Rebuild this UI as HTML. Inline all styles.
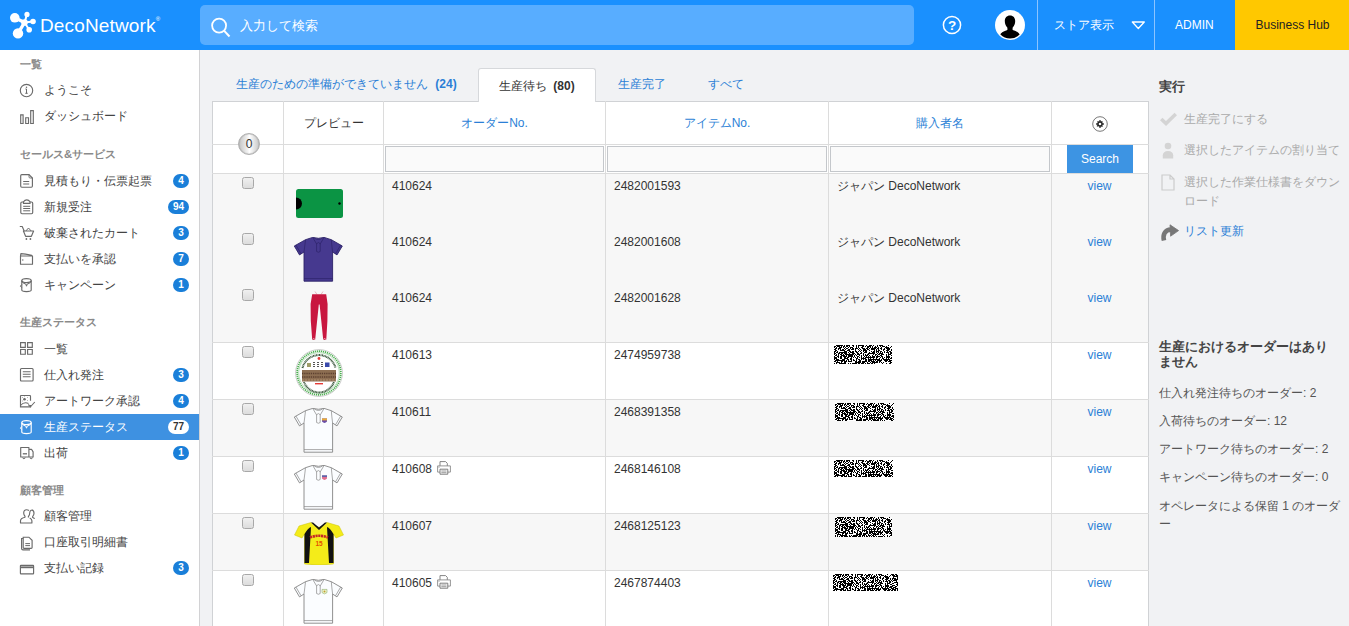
<!DOCTYPE html>
<html><head><meta charset="utf-8">
<style>
*{box-sizing:border-box;margin:0;padding:0}
html,body{width:1349px;height:626px;overflow:hidden;background:#f1f2f4;font-family:"Liberation Sans",sans-serif;color:#333}
.abs{position:absolute}
#hdr{position:absolute;left:0;top:0;width:1349px;height:50px;background:#1a90fe}
#logo{position:absolute;left:0;top:0}
#logotxt{position:absolute;left:40px;top:15px;color:#fff;font-size:19px;letter-spacing:0.15px}
#search{position:absolute;left:200px;top:5px;width:714px;height:40px;background:#58adff;border-radius:5px}
#search .ph{position:absolute;left:40px;top:12px;color:#fff;font-size:13px}
.hsep{position:absolute;top:0;width:1px;height:50px;background:#8cc4ff}
.htxt{position:absolute;color:#fff;font-size:13px}
#bhub{position:absolute;left:1235px;top:0;width:114px;height:50px;background:#ffc800;color:#222;font-size:12px;text-align:center;line-height:50px;padding-left:1px}
#side{position:absolute;left:0;top:50px;width:200px;height:576px;background:#fff;border-right:1px solid #d2d2d4}
.sh{position:absolute;left:20px;font-size:11.3px;color:#8a8a8a;font-weight:bold}
.si{position:absolute;left:0;width:199px;height:26px}
.si .t{position:absolute;left:44px;top:5px;font-size:12px;color:#444}
.si svg{position:absolute;left:19px;top:0}
.bd{position:absolute;right:10px;top:6px;min-width:16px;height:14px;border-radius:7px;background:#1a7fd9;color:#fff;font-size:10px;font-weight:bold;text-align:center;line-height:14px;padding:0 5px}
.si.act{background:#3e91e1}
.si.act .t{color:#fff}
.si.act .bd{background:#fff;color:#333}

.tab{position:absolute;top:76px;font-size:12px;color:#2b7fd6}
#acttab{position:absolute;left:478px;top:68px;width:118px;height:34px;background:#fff;border:1px solid #d6d8db;border-bottom:none;border-radius:3px 3px 0 0;font-size:12px;color:#333}
#tbl{position:absolute;left:212px;top:101px;width:937px;height:530px;background:#fff;border:1px solid #d0d2d5}
.vl{position:absolute;top:101px;width:1px;height:530px;background:#dcdcdc}
.hl{position:absolute;left:212px;width:937px;height:1px;background:#dcdcdc}
.th{position:absolute;top:115px;font-size:12px;color:#2b7fd6;text-align:center}
.inp{position:absolute;top:146px;height:26px;background:#fafafa;border:1px solid #c4c7cb}
.rowbg{position:absolute;left:213px;width:935px;background:#f7f7f7}
.cell{position:absolute;font-size:12px;color:#333}
.view{position:absolute;left:1051px;width:97px;text-align:center;font-size:12px;color:#2b7fd6}
.cb{position:absolute;left:242px;width:12px;height:12px;border:1px solid #a8a8a8;border-radius:2.5px;background:linear-gradient(#f0f0f0,#dcdcdc)}
.rp{position:absolute;left:1159px;font-size:12px;color:#555}
.redact svg{display:block}
.ra{position:absolute;left:1184px;font-size:12px;color:#aaa}
</style></head><body>
<div id="hdr">
  <svg id="logo" width="40" height="45" viewBox="0 0 40 45"><g fill="#fff"><circle cx="14.8" cy="17.8" r="4.8"/><circle cx="27" cy="14.4" r="2.6"/><circle cx="33" cy="21.5" r="2.8"/><circle cx="24.5" cy="22.5" r="3.3"/><circle cx="29.2" cy="29.7" r="2.8"/><circle cx="18" cy="33.4" r="5.2"/></g><g stroke="#fff" stroke-linecap="round"><line x1="14.8" y1="17.8" x2="24.5" y2="22.5" stroke-width="3.2"/><line x1="27" y1="14.4" x2="24.5" y2="22.5" stroke-width="2"/><line x1="33" y1="21.5" x2="24.5" y2="22.5" stroke-width="2"/><line x1="29.2" y1="29.7" x2="24.5" y2="22.5" stroke-width="2"/><line x1="18" y1="33.4" x2="24.5" y2="22.5" stroke-width="3.4"/></g></svg>
  <div id="logotxt">DecoNetwork<sup style="font-size:6px;vertical-align:top;position:relative;top:1px">®</sup></div>
  <div id="search">
    <svg class="abs" style="left:10px;top:12px" width="22" height="22" viewBox="0 0 22 22"><circle cx="9.1" cy="8.6" r="7" fill="none" stroke="#fff" stroke-width="1.8"/><line x1="14" y1="13.6" x2="19.5" y2="19.5" stroke="#fff" stroke-width="2"/></svg>
    <div class="ph">入力して検索</div>
  </div>
  <svg class="abs" style="left:942px;top:15px" width="20" height="20" viewBox="0 0 20 20"><circle cx="10" cy="10" r="8.6" fill="none" stroke="#fff" stroke-width="1.5"/><text x="10" y="14.8" text-anchor="middle" fill="#fff" font-size="13.5" font-weight="bold" font-family="Liberation Sans">?</text></svg>
  <svg class="abs" style="left:995px;top:10px" width="30" height="30" viewBox="0 0 30 30"><circle cx="15" cy="15" r="15" fill="#fff"/><clipPath id="av"><circle cx="15" cy="15" r="13.6"/></clipPath><g clip-path="url(#av)" fill="#000"><path d="M15 5.5c-3.3 0-5.2 2.4-5.2 5.6 0 2.6 1 5.2 2.6 6.6v2.2c-3.6 1-6.6 2.6-7.6 5.6L4 30h22l-0.8-4.5c-1-3-4-4.6-7.6-5.6v-2.2c1.6-1.4 2.6-4 2.6-6.6 0-3.2-1.9-5.6-5.2-5.6z"/></g></svg>
  <div class="hsep" style="left:1037px"></div>
  <div class="htxt" style="left:1054px;top:17px;font-size:12px">ストア表示</div>
  <svg class="abs" style="left:1131px;top:21px" width="15" height="10" viewBox="0 0 15 10"><path d="M1.3 1 L13.3 1 L7.3 7.5Z" fill="none" stroke="#fff" stroke-width="1.3" stroke-linejoin="round"/></svg>
  <div class="hsep" style="left:1154px"></div>
  <div class="htxt" style="left:1175px;top:18px;font-size:12px">ADMIN</div>
  <div id="bhub">Business Hub</div>
</div>

<div id="side">
<div class="sh" style="top:7px">一覧</div>
<div class="si" style="top:27px"><svg width="18" height="26" viewBox="0 0 18 26"><circle cx="7.5" cy="13.5" r="6.2" fill="none" stroke="#6a6a6a" stroke-width="1.15"/><path d="M7.5 12v4.3M6.3 16.3h2.4M6.4 12h1.1" stroke="#6a6a6a" stroke-width="1" fill="none"/><circle cx="7.5" cy="10.2" r="0.75" fill="#6a6a6a"/></svg><span class="t">ようこそ</span></div>
<div class="si" style="top:53px"><svg width="18" height="26" viewBox="0 0 18 26"><path d="M1.7 11.9h2.4v8.6h-2.4zM6.7 14.7h2.8v5.8h-2.8zM11.7 7.6h2.6v12.9h-2.6z" fill="none" stroke="#6a6a6a" stroke-width="1.15"/></svg><span class="t">ダッシュボード</span></div>
<div class="sh" style="top:97px">セールス&amp;サービス</div>
<div class="si" style="top:118px"><svg width="18" height="26" viewBox="0 0 18 26"><path d="M2.8 6.6h7.2l3.4 3.4v8.1q0 1.1-1.1 1.1h-9.5q-1.1 0-1.1-1.1v-10.4q0-1.1 1.1-1.1z" fill="none" stroke="#6a6a6a" stroke-width="1.15"/><path d="M10 6.6v2.3q0 1.1 1.1 1.1h2.3" fill="none" stroke="#6a6a6a" stroke-width="0.9"/><path d="M4.2 13.5h6M4.2 16h6" stroke="#6a6a6a" stroke-width="1.1"/></svg><span class="t">見積もり・伝票起票</span><span class="bd">4</span></div>
<div class="si" style="top:144px"><svg width="18" height="26" viewBox="0 0 18 26"><path d="M4.5 8h-1.5q-1.2 0-1.2 1.2v9.3q0 1.2 1.2 1.2h9.5q1.2 0 1.2-1.2v-9.3q0-1.2-1.2-1.2h-1.5" fill="none" stroke="#6a6a6a" stroke-width="1.15"/><path d="M4.5 9.3h6.5v-1.5q-1.2-1.9-3.2-1.9t-3.3 1.9z" fill="none" stroke="#6a6a6a" stroke-width="1.15"/><path d="M4.2 12.3h7M4.2 14.5h7M4.2 16.8h7" stroke="#6a6a6a" stroke-width="1"/></svg><span class="t">新規受注</span><span class="bd">94</span></div>
<div class="si" style="top:170px"><svg width="18" height="26" viewBox="0 0 18 26"><path d="M0.8 6.5h2.4l2 4.5M4.4 11h10.2l-2.2 5.3h-5.8z" fill="none" stroke="#6a6a6a" stroke-width="1.15" stroke-linejoin="round"/><path d="M6.8 11l2.7-3 2.7 3" fill="none" stroke="#6a6a6a" stroke-width="1"/><circle cx="7.4" cy="19" r="0.9" fill="#6a6a6a"/><circle cx="11.4" cy="19" r="0.9" fill="#6a6a6a"/></svg><span class="t">破棄されたカート</span><span class="bd">3</span></div>
<div class="si" style="top:196px"><svg width="18" height="26" viewBox="0 0 18 26"><path d="M1.5 10v8.2h12v-8.2zM1.5 10l0.4-2.4q4 0.3 10.8 1.6l0.5 0.8" fill="none" stroke="#6a6a6a" stroke-width="1.15" stroke-linejoin="round"/><circle cx="3.8" cy="14" r="0.7" fill="#6a6a6a"/></svg><span class="t">支払いを承認</span><span class="bd">7</span></div>
<div class="si" style="top:222px"><svg width="18" height="26" viewBox="0 0 18 26"><path d="M2.8 8.6v9.5q0 1.5 4.7 1.5t4.7-1.5v-9.5" fill="none" stroke="#6a6a6a" stroke-width="1.15"/><ellipse cx="7.5" cy="8.6" rx="4.7" ry="2" fill="none" stroke="#6a6a6a" stroke-width="1.15"/><path d="M2.8 9.5q2 2.5 4 2.5l0.7 2.2 0.7-2.2q2 0 4-2.5" fill="none" stroke="#6a6a6a" stroke-width="1"/><path d="M2.8 12.5l-1.4 1.6 1.4 1.6" fill="none" stroke="#6a6a6a" stroke-width="1"/></svg><span class="t">キャンペーン</span><span class="bd">1</span></div>
<div class="sh" style="top:265px">生産ステータス</div>
<div class="si" style="top:286px"><svg width="18" height="26" viewBox="0 0 18 26"><path d="M1.6 6.6h4.7v4.7h-4.7zM8.6 6.6h4.7v4.7h-4.7zM1.6 13.5h4.7v4.7h-4.7zM8.6 13.5h4.7v4.7h-4.7z" fill="none" stroke="#6a6a6a" stroke-width="1.15"/></svg><span class="t">一覧</span></div>
<div class="si" style="top:312px"><svg width="18" height="26" viewBox="0 0 18 26"><path d="M2.5 6.5h10.6q1 0 1 1v10.5q0 1-1 1h-10.6q-1 0-1-1v-10.5q0-1 1-1z" fill="none" stroke="#6a6a6a" stroke-width="1.15"/><path d="M3.8 9.8h7.8M3.8 12.2h7.8M3.8 14.8h7.8" stroke="#6a6a6a" stroke-width="1.05"/></svg><span class="t">仕入れ発注</span><span class="bd">3</span></div>
<div class="si" style="top:338px"><svg width="18" height="26" viewBox="0 0 18 26"><path d="M11.5 17v1.9h-10v-10.8q0-0.6 0.6-0.6h8.7q0.7 0 0.7 0.7v4.5" fill="none" stroke="#6a6a6a" stroke-width="1.15"/><path d="M1.5 17.5q3.5-4 8-2" fill="none" stroke="#6a6a6a" stroke-width="1.05"/><circle cx="5.5" cy="11.2" r="1.3" fill="#6a6a6a"/><path d="M3 9.5h.6M8 9.5h.6M3 13h.6M8 12.5h.6M5.5 8.6v.5" stroke="#6a6a6a" stroke-width="0.8"/><path d="M9.3 16.5l2.2 2.3 4.3-4.8" fill="none" stroke="#6a6a6a" stroke-width="1.1"/></svg><span class="t">アートワーク承認</span><span class="bd">4</span></div>
<div class="si act" style="top:364px"><svg width="18" height="26" viewBox="0 0 18 26"><path d="M2.8 8.6v9.5q0 1.5 4.7 1.5t4.7-1.5v-9.5" fill="none" stroke="#fff" stroke-width="1.15"/><ellipse cx="7.5" cy="8.6" rx="4.7" ry="2" fill="none" stroke="#fff" stroke-width="1.15"/><path d="M2.8 9.5q2 2.5 4 2.5l0.7 2.2 0.7-2.2q2 0 4-2.5" fill="none" stroke="#fff" stroke-width="1"/><path d="M2.8 12.5l-1.4 1.6 1.4 1.6" fill="none" stroke="#fff" stroke-width="1"/></svg><span class="t">生産ステータス</span><span class="bd">77</span></div>
<div class="si" style="top:390px"><svg width="18" height="26" viewBox="0 0 18 26"><path d="M1.7 7.5h8.2v9.5h-8.2zM10.5 9.3h2l1.6 2.6v5.1h-3.6" fill="none" stroke="#6a6a6a" stroke-width="1.15" stroke-linejoin="round"/><path d="M3.8 13.8h4.2" stroke="#6a6a6a" stroke-width="1.3"/><path d="M3.7 17.5q0 1.2 1.2 1.2t1.2-1.2M11 17.5q0 1.2 1.2 1.2t1.2-1.2" fill="none" stroke="#6a6a6a" stroke-width="1"/></svg><span class="t">出荷</span><span class="bd">1</span></div>
<div class="sh" style="top:433px">顧客管理</div>
<div class="si" style="top:453px"><svg width="18" height="26" viewBox="0 0 18 26"><path d="M10 7.5q-1.2-0.8-2.4-0.8-2.9 0-2.9 3.3 0 2.1 1.3 3.2v1.1q-4.5 1.1-4.5 3.5v2.2h11.4v-2.2q0-1.6-2.2-2.7" fill="none" stroke="#6a6a6a" stroke-width="1.15" stroke-linejoin="round"/><path d="M9.4 14.5v-1q1.3-1.1 1.3-3.2 0-3.3 2.7-3.3" fill="none" stroke="#6a6a6a" stroke-width="1.15"/><path d="M13 7.1q2 0.3 2 3.2 0 2-1.3 3.1v1.1q1.7 0.4 1.7 1.5" fill="none" stroke="#6a6a6a" stroke-width="1.15"/></svg><span class="t">顧客管理</span></div>
<div class="si" style="top:479px"><svg width="18" height="26" viewBox="0 0 18 26"><path d="M4.2 8.2h5.7l3.2 3.1v7.2q0 .9-.9.9h-7.2q-.8 0-.8-.9z" fill="none" stroke="#6a6a6a" stroke-width="1.15"/><path d="M4.2 9.5h-1.6v10q0 1.4 1.4 1.4h7" fill="none" stroke="#6a6a6a" stroke-width="1.15"/><path d="M6.3 14.6h4.7M6.3 16.6h4.7" stroke="#6a6a6a" stroke-width="1"/></svg><span class="t">口座取引明細書</span></div>
<div class="si" style="top:505px"><svg width="18" height="26" viewBox="0 0 18 26"><path d="M2 10.3h12q.6 0 .6.6v7.3q0 .6-.6.6h-12q-.6 0-.6-.6v-7.3q0-.6.6-.6z" fill="none" stroke="#6a6a6a" stroke-width="1.15"/><path d="M1.4 12.3h13.2" stroke="#6a6a6a" stroke-width="1.8"/></svg><span class="t">支払い記録</span><span class="bd">3</span></div>
</div>


<div class="tab" style="left:236px">生産のための準備ができていません <b style="margin-left:4px">(24)</b></div>
<div class="tab" style="left:618px">生産完了</div>
<div class="tab" style="left:708px">すべて</div>
<div id="tbl"></div>
<div id="acttab"><span style="position:absolute;left:20px;top:9px">生産待ち <b style="margin-left:3px">(80)</b></span></div>
<!-- row backgrounds -->
<div class="rowbg" style="top:174px;height:168px"></div>
<div class="rowbg" style="top:400px;height:56px"></div>
<div class="rowbg" style="top:514px;height:56px"></div>
<!-- horizontal lines -->
<div class="hl" style="top:144px"></div>
<div class="hl" style="top:173px"></div>
<div class="hl" style="top:342px"></div>
<div class="hl" style="top:399px"></div>
<div class="hl" style="top:456px"></div>
<div class="hl" style="top:513px"></div>
<div class="hl" style="top:570px"></div>
<!-- vertical lines -->
<div class="vl" style="left:283px"></div>
<div class="vl" style="left:383px"></div>
<div class="vl" style="left:605px"></div>
<div class="vl" style="left:828px"></div>
<div class="vl" style="left:1051px"></div>
<!-- header -->
<div class="th" style="left:284px;width:99px;color:#333">プレビュー</div>
<div class="th" style="left:384px;width:221px">オーダーNo.</div>
<div class="th" style="left:606px;width:222px">アイテムNo.</div>
<div class="th" style="left:829px;width:222px">購入者名</div>
<div class="abs" style="left:238px;top:133px;width:22px;height:22px;border-radius:50%;border:1px solid #b0b0b0;background:linear-gradient(90deg,#c4c4c4 0%,#f4f4f4 45%,#ffffff 52%,#c8c8c8 100%);box-shadow:inset 0 0 1px #888;font-size:12px;color:#333;text-align:center;line-height:20px">0</div>
<svg class="abs" style="left:1092px;top:116px" width="16" height="16" viewBox="0 0 16 16"><circle cx="8" cy="8" r="7.3" fill="#fff" stroke="#555" stroke-width="0.8"/><g fill="#222" transform="translate(8 8) scale(0.82) translate(-8 -8)"><circle cx="8" cy="8" r="3.4"/><path d="M7 3.3h2v2h-2zM7 10.7h2v2h-2zM3.3 7h2v2h-2zM10.7 7h2v2h-2z"/><path d="M4.5 5.2l1-1 1.4 1.4-1 1zM9.1 10.4l1-1 1.4 1.4-1 1zM10.4 4.2l1 1-1.4 1.4-1-1zM5.2 9.1l1 1-1.4 1.4-1-1z"/></g><circle cx="8" cy="8" r="1.3" fill="#fff"/></svg>
<div class="inp" style="left:385px;width:219px"></div>
<div class="inp" style="left:607px;width:220px"></div>
<div class="inp" style="left:830px;width:220px"></div>
<div class="abs" style="left:1067px;top:145px;width:66px;height:28px;background:#3d94e3;color:#fff;font-size:12px;text-align:center;line-height:28px">Search</div>
<div class="cb" style="top:177px"></div>
<div class="cell" style="left:392px;top:179px">410624</div>
<div class="cell" style="left:614px;top:179px">2482001593</div>
<div class="cell" style="left:837px;margin-top:-1px;top:179px">ジャパン DecoNetwork</div>
<div class="view" style="top:179px">view</div>
<div class="cb" style="top:233px"></div>
<div class="cell" style="left:392px;top:235px">410624</div>
<div class="cell" style="left:614px;top:235px">2482001608</div>
<div class="cell" style="left:837px;margin-top:-1px;top:235px">ジャパン DecoNetwork</div>
<div class="view" style="top:235px">view</div>
<div class="cb" style="top:289px"></div>
<div class="cell" style="left:392px;top:291px">410624</div>
<div class="cell" style="left:614px;top:291px">2482001628</div>
<div class="cell" style="left:837px;margin-top:-1px;top:291px">ジャパン DecoNetwork</div>
<div class="view" style="top:291px">view</div>
<div class="cb" style="top:346px"></div>
<div class="cell" style="left:392px;top:348px">410613</div>
<div class="cell" style="left:614px;top:348px">2474959738</div>
<svg width="0" height="0" style="position:absolute"><filter id="nz" x="0" y="0" width="100%" height="100%" color-interpolation-filters="sRGB"><feTurbulence type="fractalNoise" baseFrequency="1.4" numOctaves="1" seed="7"/><feColorMatrix type="saturate" values="0"/><feComponentTransfer><feFuncR type="linear" slope="1" intercept="-0.012"/><feFuncG type="linear" slope="1" intercept="-0.012"/><feFuncB type="linear" slope="1" intercept="-0.012"/></feComponentTransfer><feComponentTransfer><feFuncR type="discrete" tableValues="0 1"/><feFuncG type="discrete" tableValues="0 1"/><feFuncB type="discrete" tableValues="0 1"/><feFuncA type="table" tableValues="1 1"/></feComponentTransfer></filter></svg>
<svg class="abs" style="left:834px;top:345px" width="58" height="19"><rect width="58" height="19" filter="url(#nz)"/></svg>
<div class="view" style="top:348px">view</div>
<div class="cb" style="top:403px"></div>
<div class="cell" style="left:392px;top:405px">410611</div>
<div class="cell" style="left:614px;top:405px">2468391358</div>
<svg class="abs" style="left:835px;top:403px" width="59" height="18"><rect width="59" height="18" filter="url(#nz)"/></svg>
<div class="view" style="top:405px">view</div>
<div class="cb" style="top:460px"></div>
<div class="cell" style="left:392px;top:462px">410608</div>
<svg class="abs" style="left:437px;top:461px" width="14" height="14" viewBox="0 0 14 14"><path d="M3 5V0.6h5.6l1.7 1.7V5" fill="#fff" stroke="#777" stroke-width="0.9"/><path d="M0.6 4.9h12.8v6.2h-12.8z" fill="#fff" stroke="#8a8a8a" stroke-width="0.9"/><path d="M3 8.2h7.8v5h-7.8z" fill="#fff" stroke="#6f6f6f" stroke-width="0.9"/><path d="M4.3 10h5.2M4.3 11.7h5.2" stroke="#999" stroke-width="1"/><path d="M1.5 6.2h1" stroke="#777" stroke-width="0.8"/></svg>
<div class="cell" style="left:614px;top:462px">2468146108</div>
<svg class="abs" style="left:834px;top:460px" width="59" height="17"><rect width="59" height="17" filter="url(#nz)"/></svg>
<div class="view" style="top:462px">view</div>
<div class="cb" style="top:517px"></div>
<div class="cell" style="left:392px;top:519px">410607</div>
<div class="cell" style="left:614px;top:519px">2468125123</div>
<svg class="abs" style="left:835px;top:517px" width="57" height="20"><rect width="57" height="20" filter="url(#nz)"/></svg>
<div class="view" style="top:519px">view</div>
<div class="cb" style="top:574px"></div>
<div class="cell" style="left:392px;top:576px">410605</div>
<svg class="abs" style="left:437px;top:575px" width="14" height="14" viewBox="0 0 14 14"><path d="M3 5V0.6h5.6l1.7 1.7V5" fill="#fff" stroke="#777" stroke-width="0.9"/><path d="M0.6 4.9h12.8v6.2h-12.8z" fill="#fff" stroke="#8a8a8a" stroke-width="0.9"/><path d="M3 8.2h7.8v5h-7.8z" fill="#fff" stroke="#6f6f6f" stroke-width="0.9"/><path d="M4.3 10h5.2M4.3 11.7h5.2" stroke="#999" stroke-width="1"/><path d="M1.5 6.2h1" stroke="#777" stroke-width="0.8"/></svg>
<div class="cell" style="left:614px;top:576px">2467874403</div>
<svg class="abs" style="left:833px;top:574px" width="65" height="17"><rect width="65" height="17" filter="url(#nz)"/></svg>
<div class="view" style="top:576px">view</div>

<svg class="abs" style="left:296px;top:189px" width="47" height="29" viewBox="0 0 47 29"><rect x="0" y="0" width="47" height="29" rx="2.5" fill="#0b9444"/><path d="M0 8.5 a6 6 0 0 1 0 12z" fill="#000"/><circle cx="43.5" cy="14.5" r="1.2" fill="#000"/></svg>
<svg class="abs" style="left:294px;top:237px" width="49" height="46" viewBox="0 0 49 46"><path d="M18.7 0.4 L11.5 2.7 L0.3 9 L5.5 17.9 L10 15 L10 44.2 L38.6 44.2 L38.6 15 L43 17.9 L48.3 9 L37.3 2.7 L30.1 0.4 Q24.4 2.2 18.7 0.4Z" fill="#46398f" stroke="#2c2268" stroke-width="0.9" stroke-linejoin="round"/><path d="M18.7 0.4 L22.5 6.8 L24.4 5.5 L26.3 6.8 L30.1 0.4 M20.3 0.9 Q24.4 4 28.5 0.9 M11.5 2.7 Q10.8 9 10 15 M37.3 2.7 Q37.8 9 38.6 15 M1.9 8 L7.1 16.8 M46.7 8 L41.5 16.8 M10 41.6 H38.6" fill="none" stroke="#2c2268" stroke-width="0.7"/><path d="M22.6 6.5 V14.5 Q24.4 16 26.2 14.5 V6.5" fill="none" stroke="#2c2268" stroke-width="0.7"/></svg>
<svg class="abs" style="left:309px;top:291px" width="20" height="50" viewBox="0 0 20 50"><path d="M6 0.5 l2 3 M14 0.5 l-2 3" stroke="#d98a9a" stroke-width="0.6"/><path d="M3.2 3.3 H17.2 L18.6 13 L18.4 30 L17.3 48.5 Q15.5 49.5 14.2 48.5 L10.6 13.5 L9.8 13.5 L6.2 48.5 Q4.8 49.5 3.2 48.5 L1.8 30 L1.6 13 Z" fill="#c8173f"/><path d="M3.8 48.3 Q4.7 47 5.8 48.3 M14.5 48.3 Q15.6 47 16.8 48.3" stroke="#fff" stroke-width="0.7" fill="none"/></svg>
<svg class="abs" style="left:295px;top:349px" width="48" height="48" viewBox="0 0 48 48"><circle cx="24" cy="24" r="23.4" fill="#fff" stroke="#aaa" stroke-width="0.6"/><circle cx="24" cy="24" r="21.8" fill="none" stroke="#4caf50" stroke-width="1.8" stroke-dasharray="1.2 0.8"/><circle cx="24" cy="24" r="20.3" fill="none" stroke="#a5d6a7" stroke-width="0.8"/><path d="M7.5 19 A17 17 0 0 1 40.5 19" fill="none" stroke="#3d5a40" stroke-width="2" stroke-dasharray="1 0.5"/><path d="M9 33 A16 16 0 0 0 39 33" fill="none" stroke="#3d5a40" stroke-width="2" stroke-dasharray="1 0.5"/><circle cx="24" cy="9.5" r="1.4" fill="#e53935"/><rect x="12" y="14" width="4" height="4" fill="#9e9d6a"/><path d="M18 13.5h2M18 15.5h2M18 17.5h2M22 13.5h2M22 15.5h2M22 17.5h2M26 13.5h2M26 15.5h2M26 17.5h2" stroke="#555" stroke-width="1"/><rect x="30" y="13.5" width="4.5" height="4.5" fill="#3949ab"/><rect x="7" y="21" width="34" height="11.5" fill="#8d6e52"/><path d="M7 24.5h34M7 28h34" stroke="#5d4030" stroke-width="1.6" stroke-dasharray="1.3 0.9"/><path d="M7 31h34" stroke="#b09070" stroke-width="1.2" stroke-dasharray="2 1"/><rect x="20" y="34" width="8" height="1.4" fill="#e53935"/></svg>
<svg class="abs" style="left:294px;top:408px" width="49" height="46" viewBox="0 0 49 46"><path d="M18.7 0.4 L11.5 2.7 L0.3 9 L5.5 17.9 L10 15 L10 44.2 L38.6 44.2 L38.6 15 L43 17.9 L48.3 9 L37.3 2.7 L30.1 0.4 Q24.4 2.2 18.7 0.4Z" fill="#fbfdff" stroke="#858585" stroke-width="0.9" stroke-linejoin="round"/><path d="M18.7 0.4 L22.5 6.8 L24.4 5.5 L26.3 6.8 L30.1 0.4 M20.3 0.9 Q24.4 4 28.5 0.9 M11.5 2.7 Q10.8 9 10 15 M37.3 2.7 Q37.8 9 38.6 15 M1.9 8 L7.1 16.8 M46.7 8 L41.5 16.8 M10 41.6 H38.6" fill="none" stroke="#858585" stroke-width="0.7"/><path d="M22.6 6.5 V14.5 Q24.4 16 26.2 14.5 V6.5" fill="none" stroke="#858585" stroke-width="0.7"/><path d="M28 10.4 h5 v3.2 q-2.5 2.6 -5 0z" fill="#6b4fa8"/><rect x="28" y="10.4" width="5" height="2" fill="#e8a838"/></svg>
<svg class="abs" style="left:294px;top:465px" width="49" height="46" viewBox="0 0 49 46"><path d="M18.7 0.4 L11.5 2.7 L0.3 9 L5.5 17.9 L10 15 L10 44.2 L38.6 44.2 L38.6 15 L43 17.9 L48.3 9 L37.3 2.7 L30.1 0.4 Q24.4 2.2 18.7 0.4Z" fill="#fbfdff" stroke="#858585" stroke-width="0.9" stroke-linejoin="round"/><path d="M18.7 0.4 L22.5 6.8 L24.4 5.5 L26.3 6.8 L30.1 0.4 M20.3 0.9 Q24.4 4 28.5 0.9 M11.5 2.7 Q10.8 9 10 15 M37.3 2.7 Q37.8 9 38.6 15 M1.9 8 L7.1 16.8 M46.7 8 L41.5 16.8 M10 41.6 H38.6" fill="none" stroke="#858585" stroke-width="0.7"/><path d="M22.6 6.5 V14.5 Q24.4 16 26.2 14.5 V6.5" fill="none" stroke="#858585" stroke-width="0.7"/><path d="M28 10.4 h5 v3.2 q-2.5 2.6 -5 0z" fill="#e07090"/><rect x="28" y="10.4" width="5" height="1.4" fill="#4060b0"/></svg>
<svg class="abs" style="left:294px;top:522px" width="50" height="43" viewBox="0 0 50 43"><path d="M17 0.5 L5 4 L0.5 13 L8 16 L10.5 12 L10.5 42 Q25 44 39.5 42 L39.5 12 L42 16 L49.5 13 L45 4 L33 0.5 Q25 10 17 0.5Z" fill="#f4ec19" stroke="#c8c000" stroke-width="0.5"/><path d="M10.5 12 Q14 6 17 5 L15 41 L10.5 41Z M39.5 12 Q36 6 33 5 L35 41 L39.5 41Z" fill="#111"/><path d="M17 0.5 L25 8 L33 0.5 L31 0.5 L25 5.5 L19 0.5Z" fill="#111"/><path d="M16 15.5 Q25 12 34 15.5" fill="none" stroke="#c62828" stroke-width="2.6" stroke-dasharray="2.2 0.6"/><text x="25" y="24" text-anchor="middle" font-size="6.5" font-weight="bold" fill="#e65100" font-family="Liberation Sans">15</text></svg>
<svg class="abs" style="left:294px;top:579px" width="49" height="46" viewBox="0 0 49 46"><path d="M18.7 0.4 L11.5 2.7 L0.3 9 L5.5 17.9 L10 15 L10 44.2 L38.6 44.2 L38.6 15 L43 17.9 L48.3 9 L37.3 2.7 L30.1 0.4 Q24.4 2.2 18.7 0.4Z" fill="#fbfdff" stroke="#858585" stroke-width="0.9" stroke-linejoin="round"/><path d="M18.7 0.4 L22.5 6.8 L24.4 5.5 L26.3 6.8 L30.1 0.4 M20.3 0.9 Q24.4 4 28.5 0.9 M11.5 2.7 Q10.8 9 10 15 M37.3 2.7 Q37.8 9 38.6 15 M1.9 8 L7.1 16.8 M46.7 8 L41.5 16.8 M10 41.6 H38.6" fill="none" stroke="#858585" stroke-width="0.7"/><path d="M22.6 6.5 V14.5 Q24.4 16 26.2 14.5 V6.5" fill="none" stroke="#858585" stroke-width="0.7"/><path d="M28 10.4 h5 v3.2 q-2.5 2.6 -5 0z" fill="#eef4d0" stroke="#7aa050" stroke-width="0.5"/><circle cx="30.5" cy="12.5" r="1" fill="#c0a030"/></svg>
<div class="rp" style="top:78px;font-weight:bold;color:#444;font-size:13px">実行</div>
<svg class="abs" style="left:1160px;top:112px" width="17" height="14" viewBox="0 0 17 14"><path d="M1.2 7 L6 11.5 L15.8 2" fill="none" stroke="#d4d4d4" stroke-width="3.6"/></svg>
<div class="ra" style="top:111px">生産完了にする</div>
<svg class="abs" style="left:1162px;top:142px" width="12" height="17" viewBox="0 0 12 17"><circle cx="6" cy="4" r="3.3" fill="#d4d4d4"/><path d="M0.8 16.5v-3.2c0-2.6 2-4.3 5.2-4.3s5.2 1.7 5.2 4.3v3.2z" fill="#d4d4d4"/></svg>
<div class="ra" style="top:142px">選択したアイテムの割り当て</div>
<svg class="abs" style="left:1161px;top:174px" width="14" height="17" viewBox="0 0 14 17"><path d="M1 1h8l4 4v11h-12z M9 1v4h4" fill="none" stroke="#ccc" stroke-width="1.2"/></svg>
<div class="ra" style="top:173px;width:165px;line-height:19px">選択した作業仕様書をダウンロード</div>
<svg class="abs" style="left:1160px;top:224px" width="20" height="18" viewBox="0 0 20 18"><path d="M4 16.5 C2.6 11 4.5 5.8 11 5.6" fill="none" stroke="#777" stroke-width="4.6"/><path d="M10 0.8 L18.6 6.6 L10.6 12.2Z" fill="#777" stroke="#777" stroke-width="0.8" stroke-linejoin="round"/></svg>
<div class="ra" style="top:223px;color:#2b7fd6">リスト更新</div>
<div class="rp" style="top:339px;font-weight:bold;color:#444;width:180px;line-height:15px;font-size:13px">生産におけるオーダーはありません</div>
<div class="rp" style="top:385px">仕入れ発注待ちのオーダー: 2</div>
<div class="rp" style="top:413px">入荷待ちのオーダー: 12</div>
<div class="rp" style="top:441px">アートワーク待ちのオーダー: 2</div>
<div class="rp" style="top:469px">キャンペーン待ちのオーダー: 0</div>
<div class="rp" style="top:497px;width:185px;line-height:18px">オペレータによる保留 1 のオーダー</div>
</body></html>
